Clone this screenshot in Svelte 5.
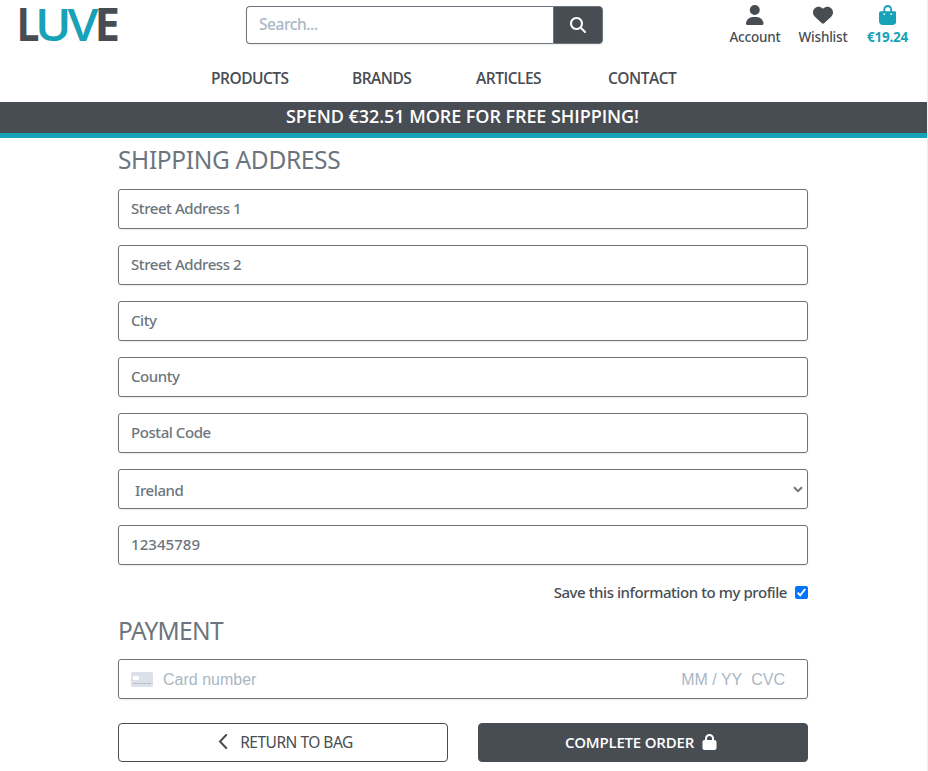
<script>
  const links = [
    ['PRODUCTS', 77, 64],
    ['BRANDS', 60, 64],
    ['ARTICLES', 69, 63],
    ['CONTACT', 66, 0]
  ];
  const fields = ['Street Address 1', 'Street Address 2', 'City', 'County', 'Postal Code'];
</script>

{#snippet icon(d, w, h, vw)}
  <svg width={w} height={h} viewBox="0 0 {vw} 512" aria-hidden="true"><path fill="currentColor" {d} /></svg>
{/snippet}

<div class="page">
  <header>
    <svg class="logo" width="101" height="36" viewBox="0 0 101 36" role="img" aria-label="LUVE">
      <text class="dark" x="-2.5" y="33.5" textLength="23" lengthAdjust="spacingAndGlyphs">L</text>
      <text class="teal" x="16" y="33.5" textLength="36.5" lengthAdjust="spacingAndGlyphs">U</text>
      <text class="teal" x="48.5" y="33.5" textLength="31" lengthAdjust="spacingAndGlyphs">V</text>
      <text class="dark" x="75.5" y="33.5" textLength="25.5" lengthAdjust="spacingAndGlyphs">E</text>
    </svg>
    <form class="search">
      <input placeholder="Search..." aria-label="Search" />
      <button type="button" aria-label="Search">
        {@render icon('M416 208c0 45.9-14.9 88.3-40 122.7L502.6 457.4c12.5 12.5 12.5 32.8 0 45.3s-32.8 12.5-45.3 0L330.7 376c-34.4 25.2-76.8 40-122.7 40C93.1 416 0 322.9 0 208S93.1 0 208 0S416 93.1 416 208zM208 352a144 144 0 1 0 0-288 144 144 0 1 0 0 288z', 16, 16, 512)}
      </button>
    </form>
    <div class="tools">
      <a class="account">
        {@render icon('M224 256A128 128 0 1 0 224 0a128 128 0 1 0 0 256zm-45.7 48C79.8 304 0 383.8 0 482.3C0 498.7 13.3 512 29.7 512H418.3c16.4 0 29.7-13.3 29.7-29.7C448 383.8 368.2 304 269.7 304H178.3z', 17.5, 20, 448)}
        <span>Account</span>
      </a>
      <a class="wishlist">
        {@render icon('M47.6 300.4L228.3 469.1c7.5 7 17.4 10.9 27.7 10.9s20.2-3.9 27.7-10.9L464.4 300.4c30.4-28.3 47.6-68 47.6-109.5v-5.8c0-69.9-50.5-129.5-119.4-141C347 36.5 300.6 51.4 268 84L256 96 244 84c-32.6-32.6-79-47.5-124.6-39.9C50.5 55.6 0 115.2 0 185.1v5.8c0 41.5 17.2 81.2 47.6 109.5z', 20, 20, 512)}
        <span>Wishlist</span>
      </a>
      <a class="bag">
        {@render icon('M160 112c0-35.3 28.7-64 64-64s64 28.7 64 64v48H160V112zm-48 48H48c-26.5 0-48 21.5-48 48V416c0 53 43 96 96 96H352c53 0 96-43 96-96V208c0-26.5-21.5-48-48-48H336V112C336 50.1 285.9 0 224 0S112 50.1 112 112v48zm24 48a24 24 0 1 1 0 48 24 24 0 1 1 0-48zm152 24a24 24 0 1 1 48 0 24 24 0 1 1 -48 0z', 17.5, 20, 448)}
        <span>€19.24</span>
      </a>
    </div>
  </header>

  <nav>
    {#each links as [name, width, gap]}
      <a style="width: {width}px; margin-right: {gap}px">{name}</a>
    {/each}
  </nav>

  <div class="banner"><span>SPEND €32.51 MORE FOR FREE SHIPPING!</span></div>

  <main>
    <h2>SHIPPING ADDRESS</h2>
    {#each fields as field}
      <input class="field" placeholder={field} aria-label={field} />
    {/each}
    <div class="field select">
      <span>Ireland</span>
      <svg width="10" height="7" viewBox="0 0 10 7"><path d="M1 1.2 5 5.2 9 1.2" fill="none" stroke="#6c757d" stroke-width="2" /></svg>
    </div>
    <input class="field phone" value="12345789" aria-label="Phone number" />
    <label class="save">
      <span>Save this information to my profile</span>
      <svg width="13" height="13" viewBox="0 0 13 13"><rect width="13" height="13" rx="2" fill="#0075ff" /><path d="M2.6 6.8 5.2 9.3 10.2 3" fill="none" stroke="#fff" stroke-width="2" /></svg>
    </label>
    <h2 class="payment">PAYMENT</h2>
    <div class="field card">
      <svg width="22" height="15" viewBox="0 0 22 15">
        <rect width="22" height="15" rx="1.5" fill="#dce0e8" />
        <rect x="2" y="4" width="6" height="4" rx="1" fill="#fff" />
        <path d="M2 11.5h18" stroke="#b4bfcd" stroke-dasharray="4 .7" />
      </svg>
      <span class="number">Card number</span><span class="expiry">MM / YY</span><span>CVC</span>
    </div>
    <div class="actions">
      <button class="return" type="button">
        <svg width="10" height="15" viewBox="0 0 10 15"><path d="M8.2 1 2 7.5 8.2 14" fill="none" stroke="currentColor" stroke-width="2" stroke-linecap="round" /></svg>
        <span>RETURN TO BAG</span>
      </button>
      <button class="complete" type="button">
        <span>COMPLETE ORDER</span>
        {@render icon('M144 144v48H304V144c0-44.2-35.8-80-80-80s-80 35.8-80 80zM80 192V144C80 64.5 144.5 0 224 0s144 64.5 144 144v48h16c35.3 0 64 28.7 64 64V448c0 35.3-28.7 64-64 64H64c-35.3 0-64-28.7-64-64V256c0-35.3 28.7-64 64-64H80z', 15, 16, 448)}
      </button>
    </div>
  </main>
</div>

<style>
  :global(body) { margin: 0; overflow: hidden; background: #fff; }
  * { box-sizing: border-box; }
  .page, input, button { font-family: 'Noto Sans', 'Open Sans', sans-serif; font-weight: 500; letter-spacing: -.43px; }
  .page { width: 928px; height: 771px; border-right: 1px solid #f0f0f0; color: #484d54; overflow: hidden; }
  svg { display: block; flex: none; }
  span, nav a, h2 { white-space: nowrap; }
  header { display: flex; height: 62px; padding: 6px 0 0 19px; }
  .logo { margin-top: 1px; overflow: visible; font-family: 'Open Sans', sans-serif; font-size: 46px; letter-spacing: 0; }
  .logo .dark { fill: #484d54; font-weight: 700; }
  .logo .teal { fill: #17a2b8; font-weight: 600; }
  .search { display: flex; width: 357px; height: 38px; margin-left: 126px; border-radius: 4px; box-shadow: 0 1px 2px rgba(0, 0, 0, .075); }
  .search input { width: 307px; height: 38px; padding: 0 12px 2px; border: 1px solid #6c757d; border-right: 0; border-radius: 4px 0 0 4px; font-size: 15.5px; outline: 0; }
  .search input::placeholder { color: #aab7c4; opacity: 1; }
  .search button { display: flex; align-items: center; justify-content: center; width: 50px; padding: 0 1px 0 0; border: 1px solid #6c757d; border-radius: 0 4px 4px 0; background: #484d54; color: #fff; }
  .tools { display: flex; margin: -1px 0 0 127px; font-size: 13.5px; line-height: 20px; letter-spacing: -.2px; }
  .tools a { display: flex; flex-direction: column; align-items: center; gap: 2px; }
  .account { width: 50px; margin-right: 18px; }
  .wishlist { width: 50px; margin-right: 18px; }
  .bag { width: 43px; color: #17a2b8; font-weight: 700; }
  nav { display: flex; height: 40px; padding: 4px 0 0 211px; font-family: 'Open Sans', sans-serif; font-size: 15.5px; font-weight: 600; line-height: 24px; letter-spacing: -.5px; }
  .banner { display: flex; justify-content: center; height: 36px; padding-right: 2px; background: #484d54; border-bottom: 5px solid #17a2b8; color: #fff; font-family: 'Open Sans', sans-serif; font-size: 18px; font-weight: 600; line-height: 29px; letter-spacing: -.07px; }
  main { width: 690px; margin-left: 118px; padding-top: 8px; }
  h2 { height: 29px; margin: 0 0 14px; color: #6c757d; font-size: 24.5px; font-weight: 400; line-height: 28px; letter-spacing: -.35px; }
  .field { display: flex; align-items: center; width: 690px; height: 40px; margin: 0 0 16px; padding: 0 12px 2px; border: 1px solid #6c757d; border-radius: 3px; background: #fff; box-shadow: 0 1px 2px rgba(0, 0, 0, .075); color: #6c757d; font-size: 15px; outline: 0; }
  .field::placeholder { color: #6c757d; opacity: 1; }
  .phone { letter-spacing: .05px; }
  .select { justify-content: space-between; padding: 2px 4px 0 16px; letter-spacing: -.4px; }
  .select svg { margin-top: -2px; }
  .save { display: flex; align-items: center; justify-content: flex-end; gap: 8px; height: 24px; margin-top: -1px; font-size: 15px; }
  .payment { margin: 13px 0 13px; letter-spacing: -.7px; }
  .card { padding: 2px 12px 0; color: #aab7c4; font-family: 'Liberation Sans', Arial, sans-serif; font-size: 16px; font-weight: 400; letter-spacing: 0; margin-bottom: 24px; }
  .card svg { margin-top: -1px; }
  .number { margin: 0 auto 0 10px; }
  .expiry { margin-right: 9px; }
  .card span:last-child { margin-right: 10px; }
  .actions { display: flex; gap: 30px; }
  .actions button { display: flex; align-items: center; justify-content: center; gap: 8px; width: 330px; height: 39px; padding: 0; border: 1px solid #484d54; border-radius: 4px; background: #fff; color: #484d54; font-size: 15px; }
  .actions span { margin-top: -2px; }
  .actions svg { margin-top: -2px; }
  .actions .return { gap: 12px; padding-left: 5px; font-size: 15.5px; font-weight: 400; letter-spacing: -.5px; }
  .actions .complete { padding-right: 4px; background: #484d54; color: #fff; font-family: 'Open Sans', sans-serif; font-weight: 600; letter-spacing: -.2px; }
</style>
